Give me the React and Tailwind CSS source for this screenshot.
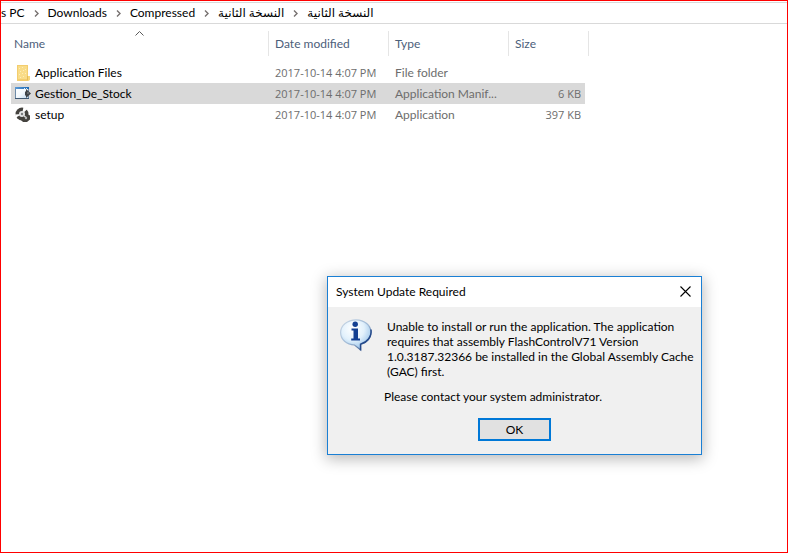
import { useState } from 'react';

const crumbs = ['s PC', 'Downloads', 'Compressed', 'النسخة الثانية', 'النسخة الثانية'];

const files = [
  { name: 'Application Files', date: '2017-10-14 4:07 PM', type: 'File folder', size: '', icon: FolderIcon },
  { name: 'Gestion_De_Stock', date: '2017-10-14 4:07 PM', type: 'Application Manif...', size: '6 KB', icon: ManifestIcon },
  { name: 'setup', date: '2017-10-14 4:07 PM', type: 'Application', size: '397 KB', icon: SetupIcon },
];

function FolderIcon() {
  return (
    <svg width="16" height="16" viewBox="0 0 16 16" className="shrink-0">
      <path d="M2 0h11v11h2v4l-2 1H2z" fill="#f3cd6e" />
      <path d="M3 1h9v13H3z" fill="#f9dc88" />
      <path d="M4 3h1M7 2h1M10 4h1M5 6h1M8 5h1M4 9h1M7 8h1M10 8h1M5 12h1M8 11h1" transform="translate(0 .5)" stroke="#fdeeb8" />
      <path d="M12 11h1v4h-1z" fill="#e6bb55" />
      <path d="M13 11h2v4h-2z" fill="#f6d67c" />
    </svg>
  );
}

function ManifestIcon() {
  return (
    <svg width="16" height="16" viewBox="0 0 16 16" className="shrink-0">
      <defs>
        <linearGradient id="pane" x1="0" y1="0" x2="1" y2="1">
          <stop offset="0" stopColor="#ffffff" />
          <stop offset="0.5" stopColor="#f4f9fd" />
          <stop offset="1" stopColor="#bcd6ee" />
        </linearGradient>
        <linearGradient id="caption">
          <stop offset="0" stopColor="#5d9bd6" />
          <stop offset="1" stopColor="#1c69b4" />
        </linearGradient>
      </defs>
      <rect x="0.5" y="1.5" width="13" height="11" fill="url(#pane)" stroke="#6f8ca8" />
      <path d="M0 1h14v2H0z" fill="url(#caption)" />
      <path d="M9 2h1v1H9zM11 2h1v1h-1z" fill="#d9ecfb" />
      <path d="M0 12h14v1H0z" fill="#3f5872" />
      <path d="M11 3l5 4.500-5 4.500V9.500h-1v-4h1z" fill="#3f4347" />
      <path d="M12 6.500h2v1h-2z" fill="#8a9096" />
    </svg>
  );
}

function SetupIcon() {
  return (
    <svg width="16" height="16" viewBox="0 0 16 16" className="shrink-0">
      <circle cx="7" cy="7" r="6.500" fill="#45433f" />
      <path d="M7 7L8.500 0l4 2zM7 7L0 7.500l1 3z" fill="#ffffff" />
      <circle cx="7" cy="7" r="3" fill="#e4e5e6" />
      <circle cx="7" cy="7" r="1.200" fill="#7b7d7f" />
      <path d="M8.500 9.500L12 7l3 1.500v4L12 15H8l-2-2z" fill="#45433f" />
      <path d="M8 8l3 2.500" stroke="#d8d9da" strokeWidth="1.500" />
      <circle cx="11" cy="11" r="1.200" fill="#b5b6b7" />
    </svg>
  );
}

function InfoIcon() {
  return (
    <svg width="34" height="34" viewBox="0 0 34 34" className="shrink-0">
      <defs>
        <radialGradient id="bubble" cx="0.4" cy="0.3" r="0.75">
          <stop offset="0" stopColor="#ffffff" />
          <stop offset="0.5" stopColor="#e2f1fc" />
          <stop offset="1" stopColor="#8dbbe6" />
        </radialGradient>
        <linearGradient id="edge" x1="0" y1="0" x2="1" y2="1">
          <stop offset="0" stopColor="#ccd9e6" />
          <stop offset="0.55" stopColor="#9db7d4" />
          <stop offset="1" stopColor="#173a78" />
        </linearGradient>
      </defs>
      <path
        d="M17 0.800C25.500 0.800 32 6.300 32 13.500c0 5.800-4.300 10.500-10.300 12v5.500L15.500 26C7.500 25.500 1.600 20.500 1.600 13.500 1.600 6.300 8.500 0.800 17 0.800z"
        fill="url(#bubble)"
        stroke="url(#edge)"
        strokeWidth="1.200"
      />
      <path d="M32 10.500c1 7-3.700 12.700-10.500 14.700v6" fill="none" stroke="#24498a" strokeWidth="1.400" />
      <circle cx="16.200" cy="5.300" r="2.700" fill="#123f92" />
      <path d="M12.500 9.500h6.500V19.500h2V21.500h-8.800v-2h2.300v-8h-2z" fill="#123f92" />
    </svg>
  );
}

function Chevron() {
  return (
    <svg width="5" height="7" viewBox="0 0 5 7" className="shrink-0">
      <path d="M1 0.500l3 3-3 3" fill="none" stroke="#76706f" strokeWidth="1.400" />
    </svg>
  );
}

function Breadcrumbs() {
  return (
    <nav className="mt-px flex h-[22px] items-center overflow-hidden border-y border-[#d9d9d9] whitespace-nowrap">
      {crumbs.map((crumb, i) => (
        <div key={i} className="flex items-center">
          {i > 0 && (
            <span className="flex w-[23px] justify-center">
              <Chevron />
            </span>
          )}
          <a href="#" className="text-black">{crumb}</a>
        </div>
      ))}
    </nav>
  );
}

function ColumnHeader({ children, sorted }) {
  return (
    <div className="flex h-[25px] flex-col border-r border-[#e5e5e5]">
      <div className="h-[5px] self-center">
        {sorted && (
          <svg width="9" height="5" viewBox="0 0 9 5">
            <path d="M0.500 4.500l4-4 4 4" fill="none" stroke="#5a5a5a" />
          </svg>
        )}
      </div>
      <span className={sorted ? 'pl-[3px]' : 'pl-1.5'}>{children}</span>
    </div>
  );
}

function FileTable() {
  const [selected, setSelected] = useState('Gestion_De_Stock');

  return (
    <table className="mt-[7px] ml-[10px] w-[578px] table-fixed border-collapse text-left text-[#6d6d6d]">
      <colgroup>
        <col className="w-[258px]" />
        <col className="w-[120px]" />
        <col className="w-[120px]" />
        <col className="w-[76px]" />
        <col className="w-[4px]" />
      </colgroup>
      <thead className="text-[#4c607a]">
        <tr>
          <th className="p-0 pb-1.5 font-normal">
            <ColumnHeader sorted>Name</ColumnHeader>
          </th>
          <th className="p-0 pb-1.5 font-normal">
            <ColumnHeader>Date modified</ColumnHeader>
          </th>
          <th className="p-0 pb-1.5 font-normal">
            <ColumnHeader>Type</ColumnHeader>
          </th>
          <th colSpan={2} className="p-0 pb-1.5 font-normal">
            <ColumnHeader>Size</ColumnHeader>
          </th>
        </tr>
      </thead>
      <tbody>
        {files.map((file) => {
          const Icon = file.icon;
          const cell = file.name === selected ? 'h-[21px] p-0 bg-[#d9d9d9]' : 'h-[21px] p-0';
          return (
            <tr key={file.name} onClick={() => setSelected(file.name)}>
              <td className={cell}>
                <div className="flex items-center gap-1 pl-1 text-black">
                  <Icon />
                  {file.name}
                </div>
              </td>
              <td className={cell}>
                <div className="pl-1.5 font-['Open_Sans',sans-serif] text-[11px] whitespace-nowrap">{file.date}</div>
              </td>
              <td className={cell}>
                <div className="pl-1.5 whitespace-nowrap">{file.type}</div>
              </td>
              <td className={cell}>
                <div className="pr-1 text-right font-['Open_Sans',sans-serif] text-[11px]">{file.size}</div>
              </td>
              <td></td>
            </tr>
          );
        })}
      </tbody>
    </table>
  );
}

function UpdateDialog({ onClose }) {
  return (
    <div
      role="dialog"
      aria-labelledby="dialog-title"
      className="absolute top-[275px] left-[326px] w-[375px] border border-[#1a7fd4] bg-[#f0f0f0] text-black shadow-[0_3px_14px_1px_rgba(0,0,0,0.28)]"
    >
      <div className="flex h-[30px] items-center justify-between bg-white pr-[9px] pl-2">
        <h1 id="dialog-title">System Update Required</h1>
        <button type="button" aria-label="Close" onClick={onClose}>
          <svg width="12" height="12" viewBox="0 0 12 12">
            <path d="M0.500 0.500l10 10M10.500 0.500l-10 10" stroke="#000000" strokeWidth="1.100" />
          </svg>
        </button>
      </div>
      <div className="flex gap-[11px] pt-3 pl-[11px]">
        <InfoIcon />
        <div className="leading-[15px] whitespace-nowrap">
          <p className="pl-[3px]">
            Unable to install or run the application. The application
            <br />
            requires that assembly FlashControlV71 Version
            <br />
            1.0.3187.32366 be installed in the Global Assembly Cache
            <br />
            (GAC) first.
          </p>
          <p className="mt-2.5">Please contact your system administrator.</p>
        </div>
      </div>
      <div className="flex justify-center pt-3.5 pb-[13px]">
        <button
          type="button"
          onClick={onClose}
          className="h-[23px] w-[73px] border-2 border-[#0078d7] bg-[#e1e1e1] leading-[19px]"
        >
          OK
        </button>
      </div>
    </div>
  );
}

export default function App() {
  const [open, setOpen] = useState(true);

  return (
    <div className="relative min-h-screen overflow-hidden border border-[#ff0000] bg-white font-['Lato','Open_Sans','DejaVu_Sans',sans-serif] text-[12px] leading-4">
      <Breadcrumbs />
      <FileTable />
      {open && <UpdateDialog onClose={() => setOpen(false)} />}
    </div>
  );
}
